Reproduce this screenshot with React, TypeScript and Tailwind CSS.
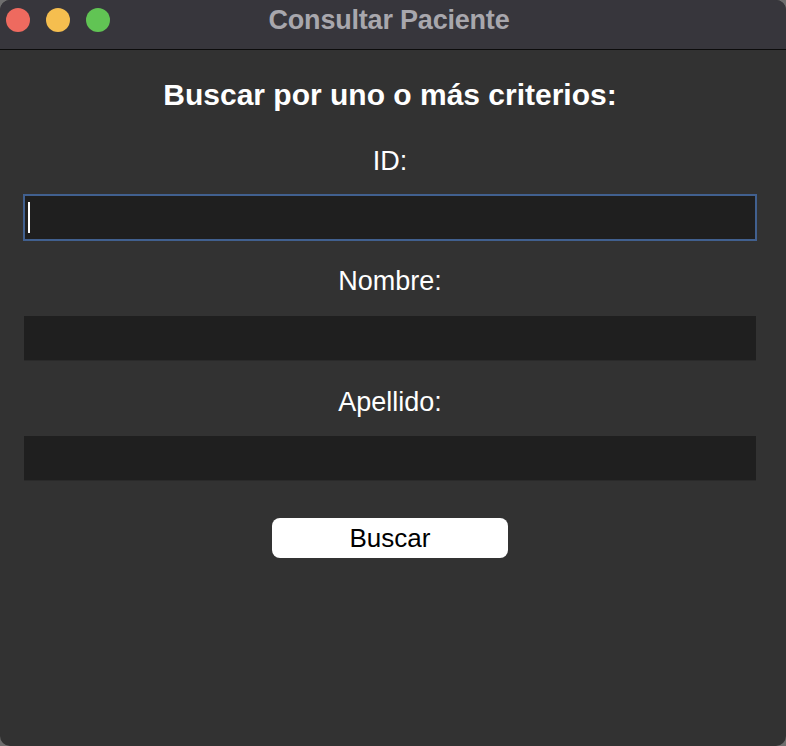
export default function App() {
  return (
    <div className="w-[786px] h-[746px] bg-[#6e6e6e] font-['Liberation_Sans',Arial,sans-serif]">
      <div className="w-full h-full rounded-[10px] overflow-hidden bg-[#323232] flex flex-col">
        {/* title bar */}
        <div className="relative h-[50px] shrink-0 bg-[#37363c] border-b border-[#0c0c0c] flex items-center justify-center">
          <div className="absolute left-[6px] top-[8px] flex gap-[16px]">
            <span className="w-[24px] h-[24px] rounded-full bg-[#ee6a5f]" />
            <span className="w-[24px] h-[24px] rounded-full bg-[#f5be4f]" />
            <span className="w-[24px] h-[24px] rounded-full bg-[#61c454]" />
          </div>
          <span className="-mt-[8px] pr-[8px] text-[27px] font-bold tracking-[-0.2px] text-[#a8a7ad]">
            Consultar Paciente
          </span>
        </div>

        {/* form */}
        <div className="flex flex-col items-center pl-[24px] pr-[30px] text-white">
          <h1 className="mt-[28px] h-[34px] leading-[34px] text-[30px] font-bold">
            Buscar por uno o más criterios:
          </h1>

          <label className="mt-[34px] h-[30px] leading-[30px] text-[27px]">ID:</label>
          <div className="mt-[18px] w-[734px] h-[47px] border-2 border-[#41608f] bg-[#1f1f1f] flex items-center pl-[3px]">
            <span className="w-[2px] h-[31px] bg-white" />
          </div>

          <label className="mt-[25px] h-[30px] leading-[30px] text-[27px]">Nombre:</label>
          <div className="mt-[20px] w-[732px] h-[45px] bg-[#1f1f1f] border-b border-[#2a2a2a]" />

          <label className="mt-[26px] h-[30px] leading-[30px] text-[27px]">Apellido:</label>
          <div className="mt-[19px] w-[732px] h-[45px] bg-[#1f1f1f] border-b border-[#2a2a2a]" />

          <button className="mt-[37px] w-[236px] h-[40px] rounded-[8px] bg-white text-black text-[26px] leading-none flex items-center justify-center">
            Buscar
          </button>
        </div>
      </div>
    </div>
  );
}
